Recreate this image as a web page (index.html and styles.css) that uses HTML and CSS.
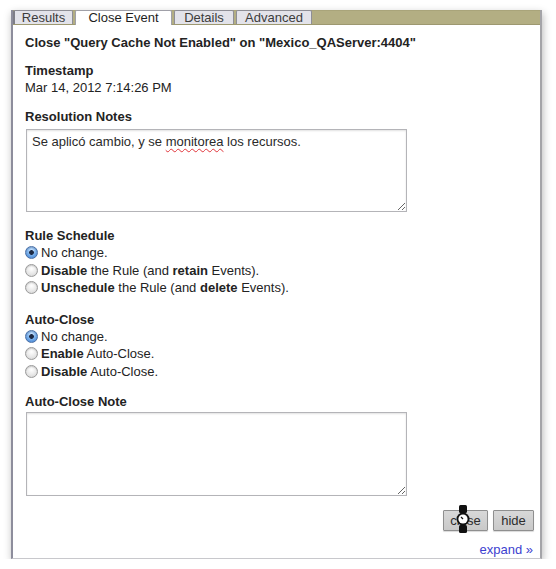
FILE: index.html
```html
<!DOCTYPE html>
<html>
<head>
<meta charset="utf-8">
<link rel="stylesheet" href="styles.css">
</head>
<body>
<div class="panel">
  <div class="tabbar">
    <div class="tab t-results">Results</div>
    <div class="tab active t-close">Close Event</div>
    <div class="tab t-details">Details</div>
    <div class="tab t-adv">Advanced</div>
  </div>
  <div class="content">
    <div class="title">Close "Query Cache Not Enabled" on "Mexico_QAServer:4404"</div>

    <div class="group g-time">
      <div class="label">Timestamp</div>
      <div class="value">Mar 14, 2012 7:14:26 PM</div>
    </div>

    <div class="group g-notes">
      <div class="label">Resolution Notes</div>
      <div class="area">Se aplicó cambio, y se <span class="spell">monitorea</span> los recursos.</div>
    </div>

    <div class="group g-rule">
      <div class="label">Rule Schedule</div>
      <div class="radio"><span class="dot on"></span><span>No change.</span></div>
      <div class="radio"><span class="dot"></span><span><b>Disable</b> the Rule (and <b>retain</b> Events).</span></div>
      <div class="radio"><span class="dot"></span><span><b>Unschedule</b> the Rule (and <b>delete</b> Events).</span></div>
    </div>

    <div class="group g-auto">
      <div class="label">Auto-Close</div>
      <div class="radio"><span class="dot on"></span><span>No change.</span></div>
      <div class="radio"><span class="dot"></span><span><b>Enable</b> Auto-Close.</span></div>
      <div class="radio"><span class="dot"></span><span><b>Disable</b> Auto-Close.</span></div>
    </div>

    <div class="group g-note">
      <div class="label">Auto-Close Note</div>
      <div class="area"></div>
    </div>

    <div class="buttons">
      <div class="btn-wrap">
        <button class="btn btn-close">close</button>
        <svg class="cursor" width="14" height="28" viewBox="0 0 14 28">
          <rect x="3" y="0" width="8" height="8" rx="1.5" fill="#111"/>
          <rect x="3" y="20" width="8" height="8" rx="1.5" fill="#111"/>
          <circle cx="7" cy="14" r="6.5" fill="#111"/>
          <circle cx="7" cy="14" r="4.6" fill="#fff"/>
          <path d="M7 14 L5 12" stroke="#111" stroke-width="1.2"/>
        </svg>
      </div>
      <button class="btn btn-hide">hide</button>
    </div>

    <div class="expand"><a href="#">expand »</a></div>
  </div>
</div>
</body>
</html>
```
FILE: styles.css
```css
html, body {
  margin: 0;
  padding: 0;
  background: #ffffff;
}

body {
  font-family: "Liberation Sans", Arial, Helvetica, sans-serif;
  font-size: 13px;
  color: #232323;
}

.panel {
  margin: 10px 0 0 11px;
  width: 531px;
  height: 549px;
  box-sizing: border-box;
  background: #ffffff;
  border-left: 2px solid #8d8d9c;
  border-right: 2px solid #a4a4a8;
  border-bottom: 1px solid #c8c8cc;
  box-shadow: 1px 3px 8px rgba(0, 0, 0, 0.28);
  display: flex;
  flex-direction: column;
}

.tabbar {
  display: flex;
  align-items: stretch;
  height: 15px;
  background: #b3ae83;
  border-top: 1px solid #a9a47a;
  box-sizing: border-box;
  border-bottom: 1px solid #9d9870;
}

.tab {
  font-size: 13px;
  line-height: 14px;
  color: #3c3c3c;
  background: #e3e3ea;
  border: 1px solid #8e8e96;
  border-bottom: none;
  border-radius: 2px 2px 0 0;
  margin-right: 2px;
  margin-top: -1px;
  text-align: center;
  box-sizing: border-box;
}

.t-results { width: 60px; border-left: 2px solid #7e7e88; }
.t-close { width: 97px; }
.t-details { width: 60px; }
.t-adv { width: 76px; }

.tab.active {
  background: #ffffff;
  color: #1e1e1e;
  border-color: #a0a0a8;
  margin-bottom: -1px;
  position: relative;
}

.content {
  flex: 1;
  padding: 9px 6px 0 12px;
  display: flex;
  flex-direction: column;
}

.title {
  font-weight: bold;
  line-height: 17px;
}

.label {
  font-weight: bold;
  line-height: 17px;
}

.value {
  line-height: 17px;
}

.group.g-time { margin-top: 11px; }
.group.g-notes { margin-top: 12px; }
.group.g-rule { margin-top: 15px; }
.group.g-auto { margin-top: 14px; }
.group.g-note { margin-top: 13px; }

.area {
  margin: 4px 0 0 1px;
  width: 381px;
  height: 83px;
  box-sizing: border-box;
  border: 1px solid #b4b4b8;
  box-shadow: inset 0 1px 2px rgba(0, 0, 0, 0.12);
  padding: 4px 5px;
  line-height: 15px;
  color: #2a2a2a;
  overflow: hidden;
  resize: both;
}

.g-note .area {
  margin-top: 2px;
  height: 84px;
}

.spell {
  text-decoration: underline wavy #e0343a;
  text-decoration-thickness: 1px;
  text-underline-offset: 2px;
}

.radio {
  display: flex;
  align-items: center;
  gap: 3px;
  line-height: 17.5px;
  height: 17.5px;
}

.radio b {
  font-weight: bold;
}

.dot {
  width: 13px;
  height: 13px;
  border-radius: 50%;
  box-sizing: border-box;
  border: 1px solid #9a9a9a;
  background: radial-gradient(circle at 50% 35%, #ffffff 0%, #e8e8e8 55%, #cfcfcf 100%);
  box-shadow: inset 0 1px 1px rgba(0, 0, 0, 0.15);
  flex: none;
}

.dot.on {
  border-color: #4a6fa5;
  background:
    radial-gradient(circle at 50% 50%, #1d2a44 0, #1d2a44 2px, transparent 2.7px),
    radial-gradient(circle at 50% 30%, #cfe6ff 0%, #7fb3ec 45%, #3d7fd0 100%);
}

.buttons {
  display: flex;
  justify-content: flex-end;
  gap: 5px;
  margin-top: 14px;
}

.btn-wrap {
  position: relative;
  display: flex;
}

.btn {
  font-family: "Liberation Sans", Arial, Helvetica, sans-serif;
  font-size: 13px;
  color: #2c2c2c;
  height: 21px;
  padding: 0;
  background: linear-gradient(#d8d8d8, #c9c9c9);
  border: 1px solid #8f8f8f;
  border-radius: 1px;
  box-shadow: 0 1px 1px rgba(0, 0, 0, 0.15);
}

.btn-close { width: 45px; }
.btn-hide { width: 41px; }

.cursor {
  position: absolute;
  left: 13px;
  top: -5px;
}

.expand {
  margin-top: auto;
  text-align: right;
  line-height: 14px;
  padding-bottom: 1px;
  padding-right: 1px;
}

.expand a {
  color: #3d3fcf;
  text-decoration: none;
}
```
